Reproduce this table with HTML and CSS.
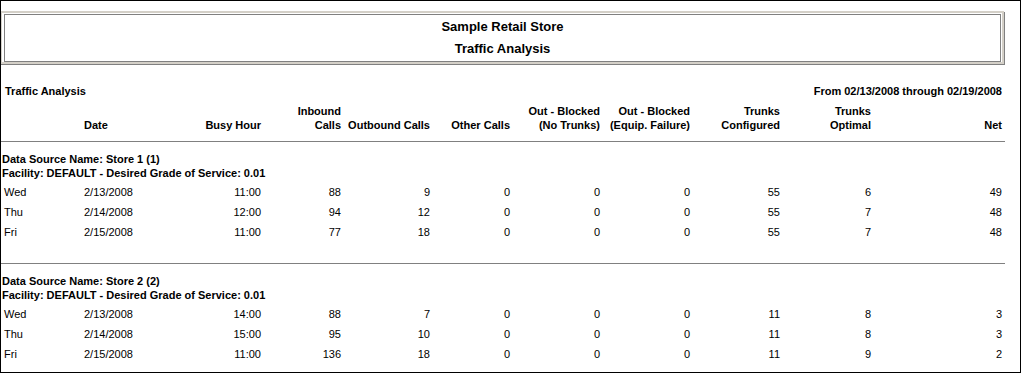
FILE: index.html
```html
<!DOCTYPE html>
<html>
<head>
<meta charset="utf-8">
<link rel="stylesheet" href="styles.css">
</head>
<body>
<div class="frame">
  <div class="title-box">
    <div class="title-inner">
      <div class="title-line">Sample Retail Store</div>
      <div class="title-line">Traffic Analysis</div>
    </div>
  </div>

  <div class="report-head">
    <span>Traffic Analysis</span>
    <span>From 02/13/2008 through 02/19/2008</span>
  </div>

  <div class="grid col-head">
    <div></div>
    <div class="left">Date</div>
    <div>Busy Hour</div>
    <div>Inbound<br>Calls</div>
    <div>Outbound Calls</div>
    <div>Other Calls</div>
    <div>Out - Blocked<br>(No Trunks)</div>
    <div>Out - Blocked<br>(Equip. Failure)</div>
    <div>Trunks<br>Configured</div>
    <div>Trunks<br>Optimal</div>
    <div>Net</div>
  </div>

  <div class="section">
    <div class="sec-title">Data Source Name: Store 1 (1)</div>
    <div class="sec-title">Facility: DEFAULT - Desired Grade of Service: 0.01</div>
    <div class="rows">
      <div class="grid row"><div class="day">Wed</div><div class="left">2/13/2008</div><div>11:00</div><div>88</div><div>9</div><div>0</div><div>0</div><div>0</div><div>55</div><div>6</div><div>49</div></div>
      <div class="grid row"><div class="day">Thu</div><div class="left">2/14/2008</div><div>12:00</div><div>94</div><div>12</div><div>0</div><div>0</div><div>0</div><div>55</div><div>7</div><div>48</div></div>
      <div class="grid row"><div class="day">Fri</div><div class="left">2/15/2008</div><div>11:00</div><div>77</div><div>18</div><div>0</div><div>0</div><div>0</div><div>55</div><div>7</div><div>48</div></div>
    </div>
  </div>

  <div class="section">
    <div class="sec-title">Data Source Name: Store 2 (2)</div>
    <div class="sec-title">Facility: DEFAULT - Desired Grade of Service: 0.01</div>
    <div class="rows">
      <div class="grid row"><div class="day">Wed</div><div class="left">2/13/2008</div><div>14:00</div><div>88</div><div>7</div><div>0</div><div>0</div><div>0</div><div>11</div><div>8</div><div>3</div></div>
      <div class="grid row"><div class="day">Thu</div><div class="left">2/14/2008</div><div>15:00</div><div>95</div><div>10</div><div>0</div><div>0</div><div>0</div><div>11</div><div>8</div><div>3</div></div>
      <div class="grid row"><div class="day">Fri</div><div class="left">2/15/2008</div><div>11:00</div><div>136</div><div>18</div><div>0</div><div>0</div><div>0</div><div>11</div><div>9</div><div>2</div></div>
    </div>
  </div>
</div>
</body>
</html>
```

FILE: styles.css
```css
html, body {
  margin: 0;
  padding: 0;
  background: #fff;
}

body {
  font-family: "Liberation Sans", Arial, sans-serif;
  font-size: 11px;
  color: #000;
}

.frame {
  box-sizing: border-box;
  width: 1021px;
  height: 373px;
  border: 1px solid #000;
  overflow: hidden;
}

.title-box {
  box-sizing: border-box;
  margin: 10px 0 0 -1px;
  width: 1004px;
  height: 53px;
  border: 2px solid #d4d0c8;
  padding: 1px 1px 0 2px;
  box-shadow: 1px 1px 0 #808080;
}

.title-inner {
  box-sizing: border-box;
  height: 48px;
  border: 1px solid #808080;
  padding-top: 1px;
  text-align: center;
  font-size: 13px;
  font-weight: bold;
  line-height: 22px;
}

.report-head {
  display: flex;
  justify-content: space-between;
  margin-top: 20px;
  padding: 0 18px 0 4px;
  font-weight: bold;
  line-height: 14px;
}

.grid {
  display: grid;
  grid-template-columns: 83px 96px 81px 80px 89px 80px 90px 90px 90px 91px 131px;
  text-align: right;
}

.grid .left {
  text-align: left;
}

.col-head {
  margin-top: 6px;
  margin-bottom: 9px;
  font-weight: bold;
  line-height: 14px;
  align-items: end;
}

.section {
  width: 1004px;
  border-top: 1px solid #808080;
  padding-top: 10px;
  margin-bottom: 21px;
}

.sec-title {
  padding-left: 1px;
  font-weight: bold;
  line-height: 14px;
}

.rows {
  margin-top: 2px;
}

.row {
  line-height: 20px;
}

.row .day {
  text-align: left;
  padding-left: 3px;
}
```
